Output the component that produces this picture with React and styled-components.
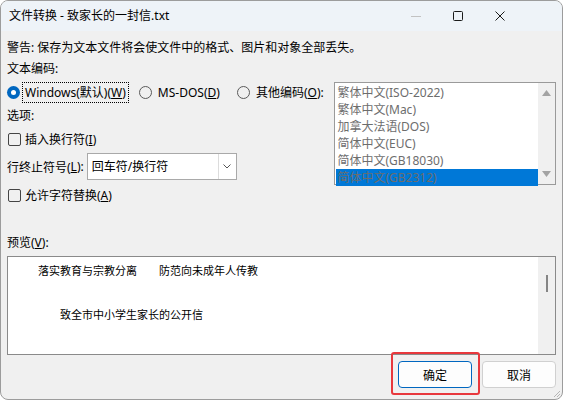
import React from "react";
import styled, { createGlobalStyle } from "styled-components";

const GlobalStyle = createGlobalStyle`
  html, body {
    margin: 0;
    padding: 0;
    background: #ffffff;
  }
  body {
    font-family: "Noto Sans", "Noto Sans CJK SC", sans-serif;
    color: #000;
  }
`;

const Window = styled.div`
  position: relative;
  width: 563px;
  height: 400px;
  box-sizing: border-box;
  border: 1px solid #9c9c9c;
  border-radius: 8px;
  overflow: hidden;
  background: #f0f0f0;
  display: flex;
  flex-direction: column;
`;

const TitleBar = styled.div`
  height: 30px;
  flex-shrink: 0;
  background: #eef3f8;
  display: flex;
  align-items: center;
  padding-left: 8px;
  font-size: 12px;
`;

const TitleText = styled.div`
  flex: 1;
  line-height: 30px;
`;

const Caption = styled.div`
  display: flex;
  padding-right: 41px;
`;

const CaptionButton = styled.div`
  width: 42px;
  height: 30px;
  display: flex;
  align-items: center;
  justify-content: center;
`;

const Body = styled.div`
  padding: 0 6px;
  font-size: 12px;
  display: flex;
  flex-direction: column;
`;

const TextRow = styled.div`
  height: 18px;
  line-height: 18px;
  margin-top: ${(p) => p.$top || 0}px;
  white-space: nowrap;
`;

const Middle = styled.div`
  display: flex;
  margin-top: 4px;
  height: 122px;
`;

const LeftCol = styled.div`
  width: 328px;
  display: flex;
  flex-direction: column;
`;

const RadioRow = styled.div`
  height: 21px;
  display: flex;
  align-items: center;
`;

const Radio = styled.span`
  width: 13px;
  height: 13px;
  box-sizing: border-box;
  border-radius: 50%;
  flex-shrink: 0;
  margin-left: ${(p) => p.$left || 0}px;
  ${(p) =>
    p.$checked
      ? `background: #0067c0; display: flex; align-items: center; justify-content: center;
         &::after { content: ""; width: 5px; height: 5px; border-radius: 50%; background: #fff; }`
      : `border: 1px solid #5a5a5a;`}
`;

const RadioLabel = styled.span`
  height: 21px;
  line-height: 19px;
  box-sizing: border-box;
  padding: 0 2px;
  margin-left: ${(p) => p.$gap || 3}px;
  border: 1px ${(p) => (p.$focus ? "dotted #000" : "solid transparent")};
  white-space: nowrap;
`;

const CheckRow = styled.div`
  height: 18px;
  display: flex;
  align-items: center;
  margin-top: ${(p) => p.$top || 0}px;
`;

const Box = styled.span`
  width: 13px;
  height: 13px;
  box-sizing: border-box;
  border: 1px solid #444;
  border-radius: 2px;
  margin-left: 1px;
  margin-right: 4px;
`;

const SelectRow = styled.div`
  height: 27px;
  display: flex;
  align-items: center;
  margin-top: 5px;
`;

const Select = styled.div`
  margin-left: 3px;
  width: 150px;
  height: 27px;
  box-sizing: border-box;
  border: 1px solid #a9a9a9;
  background: #fff;
  display: flex;
`;

const SelectValue = styled.div`
  flex: 1;
  padding-left: 4px;
  line-height: 25px;
`;

const SelectButton = styled.div`
  width: 17px;
  border-left: 1px solid #dcdcdc;
  display: flex;
  align-items: center;
  justify-content: center;
`;

const ListBox = styled.div`
  margin-left: auto;
  width: 222px;
  height: 103px;
  box-sizing: border-box;
  border: 1px solid #9a9a9a;
  background: #fff;
  display: flex;
`;

const ListItems = styled.div`
  flex: 1;
  padding: 1px 0 0 1px;
`;

const ListItem = styled.div`
  height: 17px;
  line-height: 17px;
  padding-left: 1px;
  color: #6d6d6d;
  background: ${(p) => (p.$selected ? "#0078d7" : "transparent")};
  white-space: nowrap;
`;

const ScrollTrack = styled.div`
  width: 17px;
  background: #f0f0f0;
  display: flex;
  flex-direction: column;
  align-items: center;
  justify-content: ${(p) => (p.$arrows ? "space-between" : "flex-start")};
  padding: ${(p) => (p.$arrows ? "7px 0" : "18px 0 0")};
  box-sizing: border-box;
`;

const Thumb = styled.div`
  width: 2px;
  height: 17px;
  background: #858585;
  margin-left: 1px;
`;

const Preview = styled.div`
  margin-top: 4px;
  height: 99px;
  box-sizing: border-box;
  border: 1px solid #8a8a8a;
  background: #fff;
  display: flex;
`;

const PreviewText = styled.div`
  flex: 1;
  padding-top: 3px;
  font-size: 11px;
  line-height: 22px;
  white-space: pre;
`;

const PreviewLine = styled.div`
  height: 22px;
  padding-left: ${(p) => p.$indent}px;
`;

const Buttons = styled.div`
  margin-top: 6px;
  display: flex;
  justify-content: flex-end;
  gap: 10px;
`;

const Button = styled.div`
  width: 74px;
  height: 27px;
  box-sizing: border-box;
  border: 1px solid ${(p) => (p.$primary ? "#0067c0" : "#d0d0d0")};
  border-radius: 4px;
  background: #fdfdfd;
  font-size: 12px;
  display: flex;
  align-items: center;
  justify-content: center;
`;

const Highlight = styled.div`
  position: absolute;
  left: 390px;
  top: 351px;
  width: 89px;
  height: 43px;
  box-sizing: border-box;
  border: 2px solid #e8383d;
  border-radius: 3px;
`;

const Grip = styled.svg`
  position: absolute;
  right: 1px;
  bottom: 1px;
`;

const Arrow = ({ up }) => (
  <svg width="9" height="6" viewBox="0 0 9 6">
    <path d={up ? "M0 6 L4.5 0 L9 6 Z" : "M0 0 L4.5 6 L9 0 Z"} fill="#a3a3a3" />
  </svg>
);

const encodings = [
  "繁体中文(ISO-2022)",
  "繁体中文(Mac)",
  "加拿大法语(DOS)",
  "简体中文(EUC)",
  "简体中文(GB18030)",
  "简体中文(GB2312)",
];

const App = () => {
  return (
    <>
      <GlobalStyle />
      <Window>
        <TitleBar>
          <TitleText>文件转换 - 致家长的一封信.txt</TitleText>
          <Caption>
            <CaptionButton>
              <svg width="10" height="10" viewBox="0 0 10 10">
                <path d="M0 5.5 H10" stroke="#c2c2c2" strokeWidth="1" />
              </svg>
            </CaptionButton>
            <CaptionButton>
              <svg width="10" height="10" viewBox="0 0 10 10">
                <rect x="0.5" y="0.5" width="9" height="9" rx="1" fill="none" stroke="#1a1a1a" strokeWidth="1" />
              </svg>
            </CaptionButton>
            <CaptionButton>
              <svg width="10" height="10" viewBox="0 0 10 10">
                <path d="M0.5 0.5 L9.5 9.5 M9.5 0.5 L0.5 9.5" stroke="#1a1a1a" strokeWidth="1" />
              </svg>
            </CaptionButton>
          </Caption>
        </TitleBar>
        <Body>
          <TextRow $top={8}>警告: 保存为文本文件将会使文件中的格式、图片和对象全部丢失。</TextRow>
          <TextRow $top={3}>文本编码:</TextRow>
          <Middle>
            <LeftCol>
              <RadioRow>
                <Radio $checked />
                <RadioLabel $focus $gap={2}>
                  Windows(默认)(<u>W</u>)
                </RadioLabel>
                <Radio $left={10} />
                <RadioLabel>
                  MS-DOS(<u>D</u>)
                </RadioLabel>
                <Radio $left={14} />
                <RadioLabel>
                  其他编码(<u>O</u>):
                </RadioLabel>
              </RadioRow>
              <TextRow $top={4}>选项:</TextRow>
              <CheckRow $top={5}>
                <Box />
                插入换行符(<u>I</u>)
              </CheckRow>
              <SelectRow>
                行终止符号(<u>L</u>):
                <Select>
                  <SelectValue>回车符/换行符</SelectValue>
                  <SelectButton>
                    <svg width="8" height="5" viewBox="0 0 8 5">
                      <path d="M0.5 0.5 L4 4 L7.5 0.5" fill="none" stroke="#555" strokeWidth="1" />
                    </svg>
                  </SelectButton>
                </Select>
              </SelectRow>
              <CheckRow $top={6}>
                <Box />
                允许字符替换(<u>A</u>)
              </CheckRow>
            </LeftCol>
            <ListBox>
              <ListItems>
                {encodings.map((e, i) => (
                  <ListItem key={e} $selected={i === encodings.length - 1}>
                    {e}
                  </ListItem>
                ))}
              </ListItems>
              <ScrollTrack $arrows>
                <Arrow up />
                <Arrow />
              </ScrollTrack>
            </ListBox>
          </Middle>
          <TextRow $top={30}>
            预览(<u>V</u>):
          </TextRow>
          <Preview>
            <PreviewText>
              <PreviewLine $indent={30}>落实教育与宗教分离　　防范向未成年人传教</PreviewLine>
              <PreviewLine $indent={52}> </PreviewLine>
              <PreviewLine $indent={52}>致全市中小学生家长的公开信</PreviewLine>
            </PreviewText>
            <ScrollTrack>
              <Thumb />
            </ScrollTrack>
          </Preview>
          <Buttons>
            <Button $primary>确定</Button>
            <Button>取消</Button>
          </Buttons>
        </Body>
        <Highlight />
        <Grip width="8" height="8" viewBox="0 0 8 8">
          <path d="M7 1 L1 7 M7 4 L4 7" stroke="#b5b5b5" strokeWidth="1" />
        </Grip>
      </Window>
    </>
  );
};

export default App;
